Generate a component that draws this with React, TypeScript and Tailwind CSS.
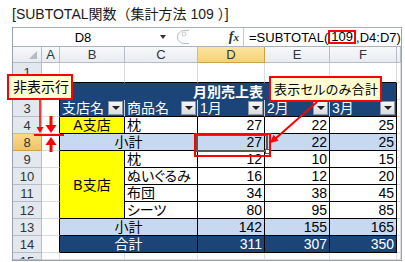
import React from "react";

const FONT = "font-['Liberation_Sans','Noto_Sans_CJK_JP',sans-serif]";
const PALT = "[font-feature-settings:'palt']";
const GRID = "border-r border-b border-[#d9dce1] bg-white";
const RH = "flex items-center justify-center bg-[#e3e7ee] border-r border-b border-[#b7bdc7] text-[13px] text-[#2f343b] leading-none";
const RH_SEL = "flex items-center justify-center bg-linear-to-b from-[#f9d98d] to-[#f3c463] border-r border-b border-[#c9a24a] text-[13px] text-[#2f343b] leading-none";
const CH = "flex items-center justify-center bg-linear-to-b from-[#f8f9fb] to-[#e8ebf0] border-r border-b border-[#b7bdc7] text-[13px] text-[#2f343b] leading-none";
const CH_SEL = "flex items-center justify-center bg-linear-to-b from-[#fbe4a0] to-[#f6d272] border-r border-b border-[#c9a24a] text-[13px] text-[#2f343b] leading-none";
const A_COL = "border-r border-b border-r-black border-b-[#d9dce1] bg-white";
const NUM = "flex items-center justify-end pr-[2px] border-r border-b border-black bg-white text-[14px] leading-none text-black";
const NUM_BLUE = "flex items-center justify-end pr-[2px] border-r border-b border-black bg-[#c6d9f1] text-[14px] leading-none text-black";
const NUM_NAVY = "flex items-center justify-end pr-[2px] border-r border-b border-black bg-[#1b4578] text-[14px] leading-none text-white";
const TXT = "flex items-center justify-start pl-[2px] border-r border-b border-black bg-white text-[14px] leading-none text-black whitespace-nowrap";

function Filter() {
  return (
    <div className="w-[15px] h-[14px] mr-[1px] bg-linear-to-b from-[#f6f6f6] to-[#d9dce1] border border-[#8e98a4] flex items-center justify-center">
      <div className="w-0 h-0 border-l-[4px] border-r-[4px] border-t-[4px] border-l-transparent border-r-transparent border-t-[#222]" />
    </div>
  );
}

function HeadCell({ label, last }: { label: string; last?: boolean }) {
  return (
    <div
      className={
        last
          ? "flex items-center justify-between pl-[2px] bg-[#1b4578] border-r border-r-black border-b border-b-black text-white text-[14px] leading-none"
          : "flex items-center justify-between pl-[2px] bg-[#1b4578] border-r border-r-[#c9d3e0] border-b border-b-black text-white text-[14px] leading-none"
      }
    >
      <span>{label}</span>
      <Filter />
    </div>
  );
}

function DataRow({
  label,
  item,
  nums,
}: {
  label: string;
  item: string;
  nums: string[];
}) {
  return (
    <>
      <div className={RH}>{label}</div>
      <div className={A_COL} />
      <div className={TXT}>{item}</div>
      {nums.map((n, i) => (
        <div key={i} className={NUM}>
          {n}
        </div>
      ))}
      <div className={GRID} />
    </>
  );
}

export default function App() {
  return (
    <div className={`relative w-[405px] h-[262px] overflow-hidden bg-white ${FONT}`}>
      {/* Title */}
      <div className="h-[27px] pl-[12px] pt-[5px] text-[14px] leading-[18px] text-[#1a1a1a] whitespace-nowrap">
        [SUBTOTAL関数（集計方法 109 ）]
      </div>

      {/* Sheet frame */}
      <div className={`ml-[12px] w-[390px] border-l border-r border-b border-[#9aa2ad] ${PALT}`}>
        {/* Formula bar */}
        <div className="flex h-[20px] border-t border-b border-[#a9b1bb] bg-white">
          <div className="w-[140px] flex items-center justify-center text-[13px] leading-none text-black">D8</div>
          <div className="w-[19px] flex items-center justify-center">
            <div className="w-0 h-0 border-l-[3px] border-r-[3px] border-t-[4px] border-l-transparent border-r-transparent border-t-[#333]" />
          </div>
          <div className="w-[71px] flex items-center justify-between pl-[3px] pr-[4px]">
            <svg width="16" height="16" viewBox="0 0 16 16">
              <path d="M14 1.5 H9 A6.5 6.5 0 0 0 9 14.5 H14" fill="#fafbfc" stroke="#b9c0c9" strokeWidth="1" />
              <circle cx="9" cy="5" r="2" fill="none" stroke="#c7ccd3" strokeWidth="1" />
            </svg>
            <span className="font-['Liberation_Serif',serif] italic font-bold text-[14px] leading-none text-[#333]">
              f<span className="text-[11px]">x</span>
            </span>
          </div>
          <div className="flex-1 border-l border-[#c4cad2] flex items-center pl-[5px] text-[13px] leading-none text-black whitespace-nowrap">
            =SUBTOTAL(
            <span className="border-2 border-[#ff0000] px-[1px] leading-[10px] py-[0px]">109</span>
            ,D4:D7)
          </div>
        </div>

        {/* Grid */}
        <div className="grid grid-cols-[29px_18px_65px_73px_67px_65px_67px_1fr] grid-rows-[16px_20px_17px_17px_17px_17px_17px_17px_17px_17px_17px_17px_7px]">
          {/* column headers */}
          <div className={`${CH} relative`}>
            <svg className="absolute right-[4px] bottom-[3px]" width="8" height="8" viewBox="0 0 8 8">
              <path d="M8 0 L8 8 L0 8 Z" fill="#b5bbc4" />
            </svg>
          </div>
          <div className={CH}>A</div>
          <div className={CH}>B</div>
          <div className={CH}>C</div>
          <div className={CH_SEL}>D</div>
          <div className={CH}>E</div>
          <div className={CH}>F</div>
          <div className={CH} />

          {/* row 1 */}
          <div className={`${RH} items-start pt-[3px]`}>1</div>
          <div className={GRID} />
          <div className="border-r border-b border-r-[#d9dce1] border-b-black bg-white" />
          <div className="border-r border-b border-r-[#d9dce1] border-b-black bg-white" />
          <div className="border-r border-b border-r-[#d9dce1] border-b-black bg-white" />
          <div className="border-r border-b border-r-[#d9dce1] border-b-black bg-white" />
          <div className="border-r border-b border-r-[#d9dce1] border-b-black bg-white" />
          <div className={GRID} />

          {/* row 2 */}
          <div className={RH}>2</div>
          <div className={A_COL} />
          <div className="col-span-5 flex items-center justify-center bg-[#1b4578] border-r border-black text-white text-[14px] font-bold leading-none">
            月別売上表
          </div>
          <div className={GRID} />

          {/* row 3 */}
          <div className={RH}>3</div>
          <div className={A_COL} />
          <HeadCell label="支店名" />
          <HeadCell label="商品名" />
          <HeadCell label="1月" />
          <HeadCell label="2月" />
          <HeadCell label="3月" last />
          <div className={GRID} />

          {/* row 4 */}
          <div className={RH}>4</div>
          <div className={A_COL} />
          <div className="flex items-center justify-center bg-[#ffff00] border-r border-b border-black text-[14px] leading-none">A支店</div>
          <div className={TXT}>枕</div>
          <div className={NUM}>27</div>
          <div className={NUM}>22</div>
          <div className={NUM}>25</div>
          <div className={GRID} />

          {/* row 8 */}
          <div className={RH_SEL}>8</div>
          <div className={A_COL} />
          <div className="col-span-2 flex items-center justify-center bg-[#c6d9f1] border-r border-b border-black text-[14px] leading-none">小計</div>
          <div className={NUM_BLUE}>27</div>
          <div className={NUM_BLUE}>22</div>
          <div className={NUM_BLUE}>25</div>
          <div className={GRID} />

          {/* row 9 */}
          <div className={RH}>9</div>
          <div className={A_COL} />
          <div className="row-span-4 flex items-center justify-center bg-[#ffff00] border-r border-b border-black text-[14px] leading-none">B支店</div>
          <div className={TXT}>枕</div>
          <div className={NUM}>12</div>
          <div className={NUM}>10</div>
          <div className={NUM}>15</div>
          <div className={GRID} />

          <DataRow label="10" item="ぬいぐるみ" nums={["16", "12", "20"]} />
          <DataRow label="11" item="布団" nums={["34", "38", "45"]} />
          <DataRow label="12" item="シーツ" nums={["80", "95", "85"]} />

          {/* row 13 */}
          <div className={RH}>13</div>
          <div className={A_COL} />
          <div className="col-span-2 flex items-center justify-center bg-[#c6d9f1] border-r border-b border-black text-[14px] leading-none">小計</div>
          <div className={NUM_BLUE}>142</div>
          <div className={NUM_BLUE}>155</div>
          <div className={NUM_BLUE}>165</div>
          <div className={GRID} />

          {/* row 14 */}
          <div className={RH}>14</div>
          <div className={A_COL} />
          <div className="col-span-2 flex items-center justify-center bg-[#1b4578] border-r border-b border-black text-white text-[14px] leading-none">合計</div>
          <div className={NUM_NAVY}>311</div>
          <div className={NUM_NAVY}>307</div>
          <div className={NUM_NAVY}>350</div>
          <div className={GRID} />

          {/* row 15 */}
          <div className={`${RH} items-start pt-[2px] overflow-hidden`}>15</div>
          <div className={GRID} />
          <div className={GRID} />
          <div className={GRID} />
          <div className={GRID} />
          <div className={GRID} />
          <div className={GRID} />
          <div className={GRID} />
        </div>
      </div>

      {/* Selection around D8 */}
      <div className="absolute left-[196px] top-[134px] w-[72px] h-[18px] border-2 border-[#5e5a4b]" />
      <div className="absolute left-[265px] top-[149px] w-[5px] h-[5px] bg-white border border-[#5e5a4b]" />
      {/* Red highlight box */}
      <div className="absolute left-[194px] top-[133px] w-[77px] h-[24px] border-2 border-[#ff0000]" />

      {/* Callouts */}
      <div className={`absolute left-[7px] top-[74px] w-[66px] h-[26px] border-2 border-[#ff0000] bg-[#ffffd2] flex items-center pl-[4px] text-[14px] leading-none text-black whitespace-nowrap ${PALT}`}>
        非表示行
      </div>
      <div className={`absolute left-[269px] top-[76px] w-[113px] h-[26px] border-2 border-[#ff0000] bg-[#ffffd2] flex items-center pl-[3px] text-[13px] tracking-[0.3px] leading-none text-black whitespace-nowrap ${PALT}`}>
        表示セルのみ合計
      </div>

      {/* Arrows */}
      <svg className="absolute left-0 top-0 pointer-events-none" width="405" height="262" viewBox="0 0 405 262">
        <line x1="40" y1="100" x2="40" y2="128" stroke="#ff0000" strokeWidth="1.5" />
        <path d="M36.5 127 L43.5 127 L40 133 Z" fill="#ff0000" />
        <line x1="34" y1="135" x2="64" y2="135" stroke="#ff0000" strokeWidth="2" />
        <rect x="49.5" y="116" width="3" height="10" fill="#ff0000" />
        <path d="M45.5 125 L56.5 125 L51 133 Z" fill="#ff0000" />
        <path d="M45.5 145 L56.5 145 L51 137 Z" fill="#ff0000" />
        <rect x="49.5" y="144" width="3" height="8" fill="#ff0000" />
        <line x1="317" y1="102" x2="275" y2="139" stroke="#ff0000" strokeWidth="2" />
        <path d="M270 143 L278.6 140.7 L273.4 134.7 Z" fill="#ff0000" />
      </svg>
    </div>
  );
}
